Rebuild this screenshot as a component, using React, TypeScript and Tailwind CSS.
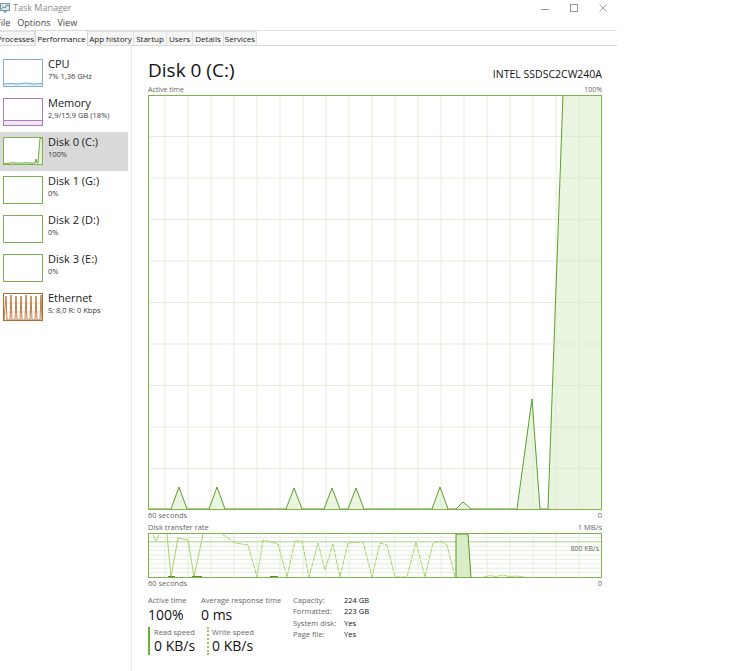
import React from 'react';

type SideItem = {
  title: string;
  sub: string;
  kind: 'cpu' | 'mem' | 'disk0' | 'disk' | 'eth';
  selected?: boolean;
};

const sideItems: SideItem[] = [
  { title: 'CPU', sub: '7%  1,36 GHz', kind: 'cpu' },
  { title: 'Memory', sub: '2,9/15,9 GB (18%)', kind: 'mem' },
  { title: 'Disk 0 (C:)', sub: '100%', kind: 'disk0', selected: true },
  { title: 'Disk 1 (G:)', sub: '0%', kind: 'disk' },
  { title: 'Disk 2 (D:)', sub: '0%', kind: 'disk' },
  { title: 'Disk 3 (E:)', sub: '0%', kind: 'disk' },
  { title: 'Ethernet', sub: 'S: 8,0  R: 0 Kbps', kind: 'eth' },
];

const tabs = [
  { label: 'Processes', w: 'w-[38px] -ml-[3px]' },
  { label: 'Performance', w: 'w-[53px]' },
  { label: 'App history', w: 'w-[46px]' },
  { label: 'Startup', w: 'w-[33px]' },
  { label: 'Users', w: 'w-[26px]' },
  { label: 'Details', w: 'w-[31px]' },
  { label: 'Services', w: 'w-[33px]' },
];

const diskInfo = [
  ['Capacity:', '224 GB'],
  ['Formatted:', '223 GB'],
  ['System disk:', 'Yes'],
  ['Page file:', 'Yes'],
];

const Thumb: React.FC<{ kind: SideItem['kind'] }> = ({ kind }) => {
  if (kind === 'cpu') {
    return (
      <svg width="40" height="28" viewBox="0 0 40 28">
        <rect x="0" y="0" width="40" height="28" fill="#fff" />
        <polygon points="1,25 8,24.5 15,25 22,24 30,25 39,24.5 39,27 1,27" fill="#e3f0fa" />
        <polyline points="1,25 8,24.5 15,25 22,24 30,25 39,24.5" fill="none" stroke="#4a90c8" strokeWidth="0.8" />
        <rect x="0.5" y="0.5" width="39" height="27" fill="none" stroke="#7fb3dc" />
      </svg>
    );
  }
  if (kind === 'mem') {
    return (
      <svg width="40" height="28" viewBox="0 0 40 28">
        <rect x="0" y="0" width="40" height="28" fill="#fff" />
        <rect x="1" y="22.5" width="38" height="4.5" fill="#f1e6f5" />
        <line x1="1" y1="22.5" x2="39" y2="22.5" stroke="#9b5bb3" strokeWidth="0.8" />
        <rect x="0.5" y="0.5" width="39" height="27" fill="none" stroke="#a77cba" />
      </svg>
    );
  }
  if (kind === 'disk0') {
    return (
      <svg width="40" height="28" viewBox="0 0 40 28">
        <rect x="0" y="0" width="40" height="28" fill="#fff" />
        <polygon points="1,27 9,26 10,25 11,26 20,26 22,25.5 24,26 32,26 33,22 34,26 35,26 37,1 39,1 39,27" fill="#e6f2dc" />
        <polyline points="1,26.5 9,26 10,25 11,26 20,26 22,25.5 24,26 32,26 33,22 34,26 35,26 37,1 39,1" fill="none" stroke="#4f9a1a" strokeWidth="0.8" />
        <rect x="0.5" y="0.5" width="39" height="27" fill="none" stroke="#7db34e" />
      </svg>
    );
  }
  if (kind === 'eth') {
    return (
      <svg width="40" height="28" viewBox="0 0 40 28">
        <rect x="0" y="0" width="40" height="28" fill="#fff" />
        <line x1="1" y1="10" x2="39" y2="10" stroke="#e2c3a6" strokeWidth="0.6" />
        <line x1="1" y1="19" x2="39" y2="19" stroke="#e2c3a6" strokeWidth="0.6" />
        <polyline
          points="1,27 3,3 4,27 7,27 8,2 9,27 12,27 13,3 14,27 17,27 18,3 19,27 22,27 23,2 24,27 27,27 28,3 29,27 32,27 33,3 34,27 37,27 38,2 39,27"
          fill="none"
          stroke="#b05f1c"
          strokeWidth="0.8"
        />
        <rect x="0.5" y="0.5" width="39" height="27" fill="none" stroke="#b26a26" />
      </svg>
    );
  }
  return (
    <svg width="40" height="28" viewBox="0 0 40 28">
      <rect x="0.5" y="0.5" width="39" height="27" fill="#fff" stroke="#7db34e" />
    </svg>
  );
};

// main chart, 454 x 415, baseline at 414
const peak = (x: number, top: number) => `${x - 8},414 ${x},${top} ${x + 8},414`;
const mainPts = [
  '0,414',
  peak(31, 392),
  peak(69, 392),
  peak(146, 393),
  peak(184, 393),
  peak(208, 393),
  peak(292, 392),
  '308,414 315,407 323,414',
  '369,414 384,304 392,414 400,414 415,0 454,0',
].join(' ');

const MainChart: React.FC = () => {
  const cols = Array.from({ length: 19 }, (_, k) => 17 + 23 * k);
  const rows = Array.from({ length: 9 }, (_, k) => 41.5 * (k + 1));
  return (
    <svg width="454" height="415" viewBox="0 0 454 415" className="block">
      {cols.map((x) => (
        <line key={`c${x}`} x1={x} y1="0" x2={x} y2="415" stroke="#e3eedb" strokeWidth="1" />
      ))}
      {rows.map((y) => (
        <line key={`r${y}`} x1="0" y1={y} x2="454" y2={y} stroke="#e3eedb" strokeWidth="1" />
      ))}
      <polygon points={`${mainPts} 454,415 0,415`} fill="#d9ecc8" fillOpacity="0.55" />
      <polyline points={mainPts} fill="none" stroke="#5e9e2c" strokeWidth="1" />
      <rect x="0.5" y="0.5" width="453" height="414" fill="none" stroke="#7fb24a" />
    </svg>
  );
};

// transfer chart, 454 x 45, baseline at 44
const abs = (pts: [number, number][]) => pts.map(([x, y]) => `${x - 148},${y - 533}`).join(' ');
const writeSeg1 = abs([[153, 535], [156, 541], [159, 535]]);
const writeSeg2 = abs([[167, 534], [171, 577], [178, 538], [188, 540], [194, 577], [203, 534]]);
const writeSeg3 = abs([
  [222, 534], [235, 543], [248, 545], [257, 577], [263, 540], [278, 544], [287, 577], [295, 541],
  [302, 541], [309, 577], [318, 543], [325, 570], [333, 544], [340, 577], [348, 543], [363, 542],
  [372, 577], [380, 543], [387, 545], [395, 577], [407, 577], [416, 542], [425, 577], [433, 543],
  [440, 541], [447, 545], [455, 577],
]);
const readBlock = abs([[456, 578], [456, 534], [468, 534], [471, 578]]);
const bumps = abs([[484, 577], [490, 575.5], [496, 576.5], [503, 575], [509, 576.5], [516, 576], [524, 577]]);

const TransferChart: React.FC = () => {
  const cols = Array.from({ length: 19 }, (_, k) => 17 + 23 * k);
  const rows = Array.from({ length: 9 }, (_, k) => 4.4 * (k + 1));
  return (
    <svg width="454" height="45" viewBox="0 0 454 45" className="block">
      {cols.map((x) => (
        <line key={`c${x}`} x1={x} y1="0" x2={x} y2="45" stroke="#e3eedb" strokeWidth="1" />
      ))}
      {rows.map((y) => (
        <line key={`r${y}`} x1="0" y1={y} x2="454" y2={y} stroke="#e3eedb" strokeWidth="1" />
      ))}
      <line x1="0" y1="8.8" x2="454" y2="8.8" stroke="#b7d59c" strokeWidth="1" />
      <polygon points={readBlock} fill="#d9ecc8" />
      <polyline points={readBlock} fill="none" stroke="#4f9a1a" strokeWidth="1" />
      <polyline points={writeSeg1} fill="none" stroke="#a6d36b" strokeWidth="1" />
      <polyline points={writeSeg2} fill="none" stroke="#a6d36b" strokeWidth="1" />
      <polyline points={writeSeg3} fill="none" stroke="#a6d36b" strokeWidth="1" strokeDasharray="5 1" />
      <polyline points={bumps} fill="none" stroke="#b7d98a" strokeWidth="1" />
      <line x1="20" y1="43.5" x2="27" y2="43.5" stroke="#4f9a1a" strokeWidth="1" />
      <line x1="44" y1="43.5" x2="54" y2="43.5" stroke="#4f9a1a" strokeWidth="1" />
      <line x1="122" y1="43.5" x2="130" y2="43.5" stroke="#4f9a1a" strokeWidth="1" />
      <rect x="0.5" y="0.5" width="453" height="44" fill="none" stroke="#7fb24a" />
    </svg>
  );
};

const App: React.FC = () => {
  return (
    <div className="w-[750px] h-[671px] bg-white overflow-hidden font-['Open_Sans','Noto_Sans',sans-serif] text-[#1a1a1a]">
      <div className="w-[617px]">
        {/* Title bar */}
        <div className="h-[15px] flex items-center relative">
          <svg width="11" height="11" viewBox="0 0 11 11">
            <rect x="0.5" y="1.5" width="9" height="7" fill="#dbe8f3" stroke="#7b93ab" />
            <polyline points="1.5,7 3.5,4.5 5,6 7,3 9,4" fill="none" stroke="#3d9a3a" strokeWidth="0.9" />
            <rect x="3.5" y="9" width="3" height="1.5" fill="#7b93ab" />
          </svg>
          <span className="ml-[2px] text-[9px] leading-[15px] text-[#8a8a8a]">Task Manager</span>
          <div className="ml-auto flex items-center h-[15px]">
            <svg width="10" height="10" viewBox="0 0 10 10" className="mr-[19px]">
              <line x1="1" y1="6.5" x2="9" y2="6.5" stroke="#9a9a9a" strokeWidth="1" />
            </svg>
            <svg width="10" height="10" viewBox="0 0 10 10" className="mr-[19px]">
              <rect x="1.5" y="1.5" width="7" height="7" fill="none" stroke="#9a9a9a" strokeWidth="1" />
            </svg>
            <svg width="10" height="10" viewBox="0 0 10 10" className="mr-[9px]">
              <path d="M1.5 1.5 L8.5 8.5 M8.5 1.5 L1.5 8.5" stroke="#9a9a9a" strokeWidth="0.9" />
            </svg>
          </div>
        </div>

        {/* Menu bar */}
        <div className="h-[15px] flex items-center gap-[7px] text-[9px] leading-[15px] text-[#444] -ml-[4px]">
          <span>File</span>
          <span>Options</span>
          <span>View</span>
        </div>

        {/* Tabs */}
        <div className="h-[16px] flex items-end border-b border-[#d9d9d9] relative">
          <div className="absolute left-0 right-0 top-[0px] border-t border-[#e3e3e3]" />
          {tabs.map((t) =>
            t.label === 'Performance' ? (
              <div
                key={t.label}
                className={`${t.w} relative z-10 h-[16px] -mb-[1px] bg-white border-x border-t border-[#d9d9d9] flex items-center justify-center text-[8px] leading-[14px] text-[#111] whitespace-nowrap`}
              >
                {t.label}
              </div>
            ) : (
              <div
                key={t.label}
                className={`${t.w} h-[14px] bg-[#f5f5f5] border-r border-t border-[#e0e0e0] flex items-center justify-center text-[8px] leading-[14px] text-[#222] whitespace-nowrap`}
              >
                {t.label}
              </div>
            )
          )}
        </div>

        {/* Body */}
        <div className="flex h-[625px]">
          <aside className="w-[132px] shrink-0 border-r border-[#e8e8e8] pt-[8px]">
            {sideItems.map((item) => (
              <div
                key={item.title}
                className={`w-[128px] h-[39px] flex items-start pt-[5px] pl-[3px] ${item.selected ? 'bg-[#d9d9d9]' : ''}`}
              >
                <Thumb kind={item.kind} />
                <div className="ml-[5px] -mt-[2px]">
                  <div className="text-[11px] leading-[14px] text-[#1a1a1a]">{item.title}</div>
                  <div className="text-[7.5px] leading-[10px] text-[#3a3a3a]">{item.sub}</div>
                </div>
              </div>
            ))}
          </aside>

          <main className="pl-[16px] w-[470px]">
            <div className="h-[38px] flex items-end justify-between pb-[3px] w-[454px]">
              <h1 className="text-[19px] leading-[22px] text-[#111]">Disk 0 (C:)</h1>
              <span className="text-[10.5px] leading-[14px] text-[#111]">INTEL SSDSC2CW240A</span>
            </div>
            <div className="h-[11px] flex justify-between items-center w-[454px] text-[7px] leading-[11px] text-[#666]">
              <span>Active time</span>
              <span>100%</span>
            </div>
            <MainChart />
            <div className="h-[11px] flex justify-between items-center w-[454px] text-[7.5px] leading-[11px] text-[#666]">
              <span>60 seconds</span>
              <span>0</span>
            </div>
            <div className="h-[12px] flex justify-between items-center w-[454px] text-[7.5px] leading-[12px] text-[#666]">
              <span>Disk transfer rate</span>
              <span>1 MB/s</span>
            </div>
            <div className="relative w-[454px]">
              <TransferChart />
              <span className="absolute right-[3px] top-[11px] text-[7px] leading-[9px] text-[#666]">800 KB/s</span>
            </div>
            <div className="h-[11px] flex justify-between items-center w-[454px] text-[7.5px] leading-[11px] text-[#666]">
              <span>60 seconds</span>
              <span>0</span>
            </div>

            {/* Stats */}
            <div className="flex mt-[6px]">
              <div className="w-[145px]">
                <div className="flex">
                  <div className="w-[53px]">
                    <div className="text-[7.5px] leading-[10px] text-[#666]">Active time</div>
                    <div className="text-[14px] leading-[19px] text-[#111]">100%</div>
                  </div>
                  <div>
                    <div className="text-[7.5px] leading-[10px] text-[#666] whitespace-nowrap">Average response time</div>
                    <div className="text-[14px] leading-[19px] text-[#111]">0 ms</div>
                  </div>
                </div>
                <div className="flex mt-[3px]">
                  <div className="w-[59px] h-[28px] border-l-2 border-[#6bb02e] pl-[4px]">
                    <div className="text-[7.5px] leading-[10px] text-[#666]">Read speed</div>
                    <div className="text-[14px] leading-[18px] text-[#111]">0 KB/s</div>
                  </div>
                  <div className="h-[28px] border-l-2 border-dotted border-[#96c95a] pl-[3px]">
                    <div className="text-[7.5px] leading-[10px] text-[#666]">Write speed</div>
                    <div className="text-[14px] leading-[18px] text-[#111]">0 KB/s</div>
                  </div>
                </div>
              </div>
              <div className="flex flex-col">
                {diskInfo.map(([k, v]) => (
                  <div key={k} className="flex h-[11.3px] items-center text-[7.5px] leading-[11px]">
                    <span className="w-[51px] text-[#666]">{k}</span>
                    <span className="text-[#111]">{v}</span>
                  </div>
                ))}
              </div>
            </div>
          </main>
        </div>
      </div>
    </div>
  );
};

export default App;
